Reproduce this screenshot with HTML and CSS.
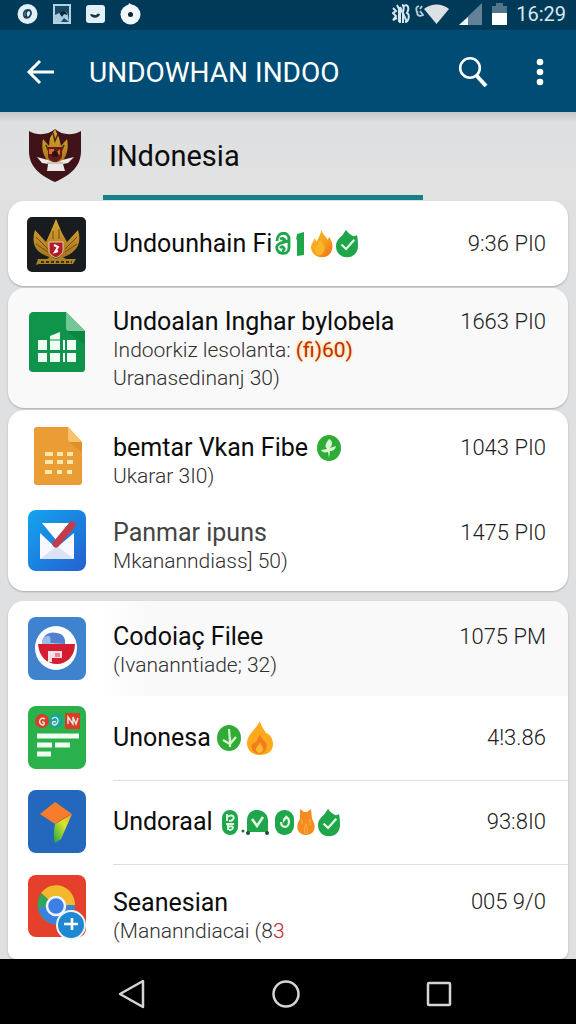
FILE: index.html
```html
<!DOCTYPE html>
<html lang="id">
<head>
<meta charset="utf-8">
<meta name="viewport" content="width=device-width, initial-scale=1">
<title>Undowhan Indoo</title>
<link rel="stylesheet" href="styles.css">
</head>
<body>
<svg class="defs" width="0" height="0" aria-hidden="true">
  <defs>
    <linearGradient id="fire" x1="0" y1="0" x2="1" y2="1"><stop offset="0" stop-color="#fdb822"/><stop offset=".55" stop-color="#f8a01c"/><stop offset="1" stop-color="#ee6a14"/></linearGradient>
    <linearGradient id="mail" x1="0" y1="0" x2="1" y2="1"><stop offset="0" stop-color="#12a5ef"/><stop offset="1" stop-color="#2460cf"/></linearGradient>
    <linearGradient id="gold" x1="0" y1="0" x2="0" y2="1"><stop offset="0" stop-color="#dba833"/><stop offset="1" stop-color="#a8741a"/></linearGradient>
    <linearGradient id="ribbon" x1="1" y1="0" x2="0" y2="1"><stop offset="0" stop-color="#f6a02c"/><stop offset=".4" stop-color="#dbe52c"/><stop offset="1" stop-color="#18a63e"/></linearGradient>
    <symbol id="flame" viewBox="0 0 24 30"><path d="M11 0c1 4 6 8 7 11l2-3c3 5 4 9 3 13-1 6-6 9-11 9S1 27 0 20c0-5 3-7 4-11l2 4c2-4 5-8 5-13z" fill="url(#fire)"/><path d="M9 28c-5-2-6-6-3-10l5-8c0 5 4 5 4 10 0 4-2 7-6 8z" fill="#fbb52b"/></symbol>
    <symbol id="leafcheck" viewBox="0 0 24 30"><path d="M11 0c2 4 5 5 8 7l4-1c1 5 1 9 1 12 0 7-5 12-12 12S0 25 0 18c0-6 4-9 7-12z" fill="#1fa64b"/><path d="M6 16l5 5 9-10" fill="none" stroke="#e5f8e8" stroke-width="2.400"/></symbol>
    <symbol id="sprout" viewBox="0 0 24 26"><ellipse cx="12" cy="13" rx="12" ry="13" fill="#2fac35"/><path d="M12 4c4 2 4 6 1 9l6-2c-1 4-3 5-6 5l-1 7-1-6c-4 1-6 0-7-2l6-1c-3-3-1-6 2-10z" fill="#d9f4cf"/></symbol>
    <symbol id="sproutdown" viewBox="0 0 24 26"><ellipse cx="12" cy="13" rx="12" ry="13" fill="#2fac35"/><path d="M12 4l1 13M6 15l7 4 6-7M13 12v10" fill="none" stroke="#d9f4cf" stroke-width="2.200"/></symbol>
  </defs>
</svg>
<div class="screen">
  <header>
    <div class="status">
      <div class="status-group notices">
        <svg width="21" height="22" viewBox="0 0 21 22"><circle cx="10.500" cy="11" r="10" fill="#e3f0f7"/><path d="M7 13c-1-4 1-6 4-6s4 3 2 6-5 2-6 0M11 7c-3 2-2 6-1 7" fill="none" stroke="#17415a" stroke-width="1.800"/></svg>
        <svg width="18" height="20" viewBox="0 0 18 20"><path d="M1 1h16v18H1z" fill="#174a68" stroke="#b4d2e2" stroke-width="2"/><path d="M2 18v-7l4-2 2 2 3-4c4 0 4 5 5 11l-5-4-3 4z" fill="#a7cbe0"/><path d="M7 10c2-4 7-4 7 1l-3-1-2 3z" fill="#0a2438"/></svg>
        <svg width="19" height="18" viewBox="0 0 19 18"><rect width="19" height="18" rx="3" fill="#e3f0f7"/><path d="M4 9c3 1 7-1 10 0-1 5-9 5-10 0z" fill="#17344a"/><ellipse cx="9" cy="9" rx="2" ry="1" fill="#fff"/></svg>
        <svg width="21" height="22" viewBox="0 0 21 22"><circle cx="10.500" cy="11.500" r="10" fill="#f2f9fd"/><path d="M9 0l5 3H8z" fill="#f2f9fd"/><circle cx="10.500" cy="11.500" r="2.500" fill="#123"/></svg>
      </div>
      <div class="status-group">
        <svg width="18" height="22" viewBox="0 0 18 22"><path d="M1 5l3 3-3 2 3 3-3 4 4-2M5 2l3 6v12M8 4l7 15" fill="none" stroke="#d6e6ef" stroke-width="2"/><path d="M7 4v15M10 2c2 0 2 4 1 7v11M12 3c5-3 5 4 3 7 3 1 2 9-2 9" fill="none" stroke="#d6e6ef" stroke-width="2"/></svg>
        <svg width="35" height="22" viewBox="0 0 35 22"><path d="M5 3c-4 1-3 5-1 7M6 8l3 4c-4 2-6 0-6-3M8 3l-2 3" fill="none" stroke="#b5cedb" stroke-width="1.800"/><path d="M10 6c7-6 18-6 25 0L22.500 21z" fill="#dbe1e5"/></svg>
        <svg class="signal" width="23" height="22" viewBox="0 0 23 22"><path d="M23 0v22H0z" fill="#63829a"/><path d="M9 14v8H0z" fill="#f3f9fc"/></svg>
        <svg class="battery" width="15" height="22" viewBox="0 0 15 22"><path d="M0 3h4V0h7v3h4v8H0z" fill="#53758b"/><path d="M0 10h15v12H0z" fill="#fff"/></svg>
        <span class="clock">16:29</span>
      </div>
    </div>
    <div class="appbar">
      <button class="icon-btn" type="button" aria-label="Back"><svg width="28" height="26" viewBox="0 0 28 26"><path d="M14 2L3 13l11 11M3 13h25" fill="none" stroke="#fff" stroke-width="3"/></svg></button>
      <h1>UNDOWHAN INDOO</h1>
      <button class="icon-btn" type="button" aria-label="Search"><svg width="30" height="32" viewBox="0 0 30 32"><circle cx="12" cy="12" r="9.800" fill="none" stroke="#fff" stroke-width="2.600"/><path d="M18 19l10 11" stroke="#fff" stroke-width="4"/></svg></button>
      <button class="icon-btn" type="button" aria-label="More options"><svg width="8" height="28" viewBox="0 0 8 28"><g fill="#fff"><circle cx="4" cy="4" r="3.300"/><circle cx="4" cy="14" r="3.300"/><circle cx="4" cy="24" r="3.300"/></g></svg></button>
    </div>
  </header>

  <div class="tabs">
    <svg class="crest" width="54" height="54" viewBox="0 0 54 54"><path d="M1 2c9 5 19 4 26-2 7 6 17 7 26 2v20C53 37 43 46 27 53 11 46 1 37 1 22z" fill="#401319"/><path d="M15 10l6 7 1-8 5-9 4 9 2 8 6-7c2 9 0 17-6 24H21c-6-7-8-15-6-24z" fill="url(#gold)"/><path d="M25 4l2 8 3-7M18 16l4 9M36 16l-4 9" stroke="#432b15" stroke-width="1.500" fill="none"/><path d="M20 18h14v9c0 3-4 5-7 7-4-2-7-4-7-7z" fill="#631b18"/><path d="M21 20h5v5h-5zM28 24l4-4v6z" fill="#e06b29"/><circle cx="27" cy="25" r="3" fill="#201614"/><path d="M9 28l11 3c5 3 10 3 14 0l12-3-6 6-5 1 2 7H19l1-7-6-1z" fill="#ede7e5"/><path d="M19 34h16" stroke="#a99b98"/></svg>
    <button class="tab" type="button" aria-pressed="true">INdonesia</button>
  </div>

  <main>
    <section class="card first">
      <a class="row single" href="#undounhain">
        <svg class="icon" width="60" height="60" viewBox="0 0 60 60"><rect x="0" y="3" width="59" height="55" rx="5" fill="#191c1e"/><path d="M8 16l11 12 4-9 6-14 6 14 5 9 11-12c4 14-1 22-14 27H22C8 38 4 30 8 16z" fill="url(#gold)"/><path d="M9 23l12 12M9 30l12 8M50 23L38 35M50 30l-12 8M26 17v8M32 15v10" stroke="#6c4e1d" fill="none"/><path d="M22 28h14v8c0 4-4 6-7 8-4-2-7-4-7-8z" fill="#b31c27" stroke="#e6c8b0"/><path d="M27 31l4 2-3 5 3-1" stroke="#fff" stroke-width="2" fill="none"/><path d="M11 45h9l4-3 5 3 5-3 5 3h10l-3 5H12l-3 1z" fill="#aa8223"/><path d="M14 48h31" stroke="#3b3014" stroke-width="2" stroke-dasharray="3 2"/></svg>
        <span class="text"><span class="title">Undounhain Fi<svg width="16" height="24" viewBox="0 0 16 24"><path d="M2 9c0-10 12-10 12-2 0 4-10 2-12 7-2 9 12 10 12 2V5M5 7c4-2 7 2 2 3M5 16c4-4 6 3 2 3" fill="none" stroke="#1fa64b" stroke-width="2.800"/></svg><svg class="bar" width="9" height="24" viewBox="0 0 9 24"><path d="M1 2l7-2v23l-7 1V7L0 8z" fill="#1fa64b"/></svg><svg width="22" height="29"><use href="#flame"/></svg><svg width="22" height="29"><use href="#leafcheck"/></svg></span></span>
        <time class="time">9:36 PI0</time>
      </a>
    </section>

    <section class="card tinted">
      <a class="row triple" href="#undoalan">
        <svg class="icon" width="60" height="62" viewBox="0 0 60 62"><path d="M6 1h33l19 19v38c0 2-1 3-3 3H6c-2 0-4-1-4-3V5c0-2 2-4 4-4z" fill="#10944b"/><path d="M39 1l19 19H42c-2 0-3-1-3-3z" fill="#75c798"/><path d="M40 20h18v14z" fill="#087a3b" opacity=".5"/><path d="M11 29h9v10h-9zm12-4l10-4v18H23zm13 4h2v10h-2zm4 0h9v10h-9zM11 42h9v9h-9zm12 0h10v9H23zm13 0h2v9h-2zm4 0h9v9h-9z" fill="#effff3"/><path d="M22 29h12" stroke="#10944b"/></svg>
        <span class="text"><span class="title">Undoalan Inghar bylobela</span><span class="sub">Indoorkiz lesolanta: <b class="hot">(fi)60)</b></span><span class="sub">Uranasedinanj 30)</span></span>
        <time class="time">1663 PI0</time>
      </a>
    </section>

    <section class="card">
      <a class="row upper" href="#bemtar">
        <svg class="icon" width="60" height="60" viewBox="0 0 60 60"><path d="M10 1h31l14 15v40c0 2-1 3-3 3H10c-2 0-3-1-3-3V4c0-2 1-3 3-3z" fill="#e99d34"/><path d="M41 1l14 15H44c-2 0-3-1-3-3z" fill="#f6c36c"/><path d="M42 16h13v10z" fill="#cf8321" opacity=".45"/><path d="M18 28h8m4 0h6m4 0h6M18 36h8m4 0h6m4 0h6M18 46h7m5 0h5m5 0h5" stroke="#ffe8a9" stroke-width="4"/></svg>
        <span class="text"><span class="title">bemtar Vkan Fibe <svg width="24" height="26"><use href="#sprout"/></svg></span><span class="sub">Ukarar 3I0)</span></span>
        <time class="time">1043 PI0</time>
      </a>
      <a class="row lower" href="#panmar">
        <svg class="icon" width="60" height="62" viewBox="0 0 60 62"><rect x="1" y="0" width="58" height="61" rx="8" fill="url(#mail)"/><path d="M13 23l16 15 18-15v26H13z" fill="#f8f9ff"/><path d="M13 49l17-13 17 13z" fill="#dbe4f7"/><path d="M15 13h27L29 30z" fill="#fff"/><path d="M29 34l16-19" stroke="#c43c4b" stroke-width="7" stroke-linecap="round"/></svg>
        <span class="text"><span class="title muted">Panmar ipuns</span><span class="sub">Mkananndiass] 50)</span></span>
        <time class="time">1475 PI0</time>
      </a>
    </section>

    <section class="card last">
      <a class="row shaded" href="#codoiar">
        <svg class="icon" width="60" height="64" viewBox="0 0 60 64"><rect x="1" y="0" width="58" height="63" rx="8" fill="#3f83cf"/><ellipse cx="29" cy="31" rx="21" ry="22" fill="#fff"/><path d="M15 26c1-8 7-12 15-10 6 1 9 5 8 11z" fill="#5381d2"/><path d="M15 23c6-7 10-5 8 4h-8z" fill="#9cbdeb"/><path d="M11 27h37c0 12-8 20-18 20-11 0-18-8-19-20z" fill="#d51c31"/><path d="M21 34h14v7H25v4h-4z" fill="#f7e3e7"/><path d="M28 36h5v4h-5z" fill="#e98795"/></svg>
        <span class="text"><span class="title">Codoiaç Filee</span><span class="sub">(Ivananntiade; 32)</span></span>
        <time class="time">1075 PM</time>
      </a>
      <a class="row single" href="#unonesa">
        <svg class="icon" width="60" height="64" viewBox="0 0 60 64"><rect x="1" y="0" width="58" height="63" rx="8" fill="#2bb14b"/><circle cx="15" cy="15" r="7" fill="#dd3b27"/><circle cx="29" cy="15" r="7" fill="#16a69c"/><path d="M38 7h15v16H38z" fill="#dd3b27"/><path d="M18 13c-4-3-8 3-3 6 3 0 3-4 0-3M25 13c5-5 9 3 3 6-4 0-3-5 1-3M41 18v-7l5 7v-7l3 7 2-6" fill="none" stroke="#e5eee8" stroke-width="1.400"/><path d="M10 30h42M10 39h15m3 0h15M10 48h14" stroke="#f1fff2" stroke-width="5"/></svg>
        <span class="text"><span class="title">Unonesa<svg class="spaced" width="24" height="26"><use href="#sproutdown"/></svg><svg class="spaced" width="26" height="34" viewBox="0 0 26 34"><path d="M13 0c1 5 3 7 6 12 4 1 7 6 7 11 0 7-5 11-13 11S0 29 0 22C0 14 9 8 13 0z" fill="#fca91c"/><path d="M13 33c-8-1-9-5-8-10l4-2 4-8c1 5 5 7 7 10 0 5-2 9-7 10z" fill="#f47b20"/><path d="M13 21c1 4 4 5 3 8-1 4-6 4-7 0-1-3 3-4 4-8z" fill="#fdb92d"/></svg></span></span>
        <time class="time">4!3.86</time>
      </a>
      <a class="row single ruled" href="#undoraal">
        <svg class="icon" width="60" height="64" viewBox="0 0 60 64"><rect x="1" y="0" width="58" height="63" rx="8" fill="#2468bd"/><path d="M28 34l17-10-11 25-6 4c-2-5-1-13 0-19z" fill="url(#ribbon)"/><path d="M13 24l15-12 17 12-17 10z" fill="#f77c2c"/><path d="M28 34l17-10-8 4z" fill="#ce5222"/></svg>
        <span class="text"><span class="title">Undoraal <svg width="16" height="25" viewBox="0 0 16 25"><rect width="16" height="25" rx="8" fill="#1fa64b"/><path d="M5 4v7M5 7c8-5 9 4 2 4M4 14h8M6 13v7m0-3c7-3 6 3 1 3" fill="none" stroke="#dff6e2" stroke-width="2"/></svg><svg width="28" height="25" viewBox="0 0 28 25"><path d="M6 22V11C6 4 10 0 16 0s11 4 11 11v11z" fill="#1fa64b"/><circle cx="2" cy="21" r="1.500" fill="#286a37"/><circle cx="7" cy="23" r="2" fill="#17552a"/><circle cx="26" cy="23" r="2" fill="#17552a"/><path d="M11 9l5 7 6-9" fill="none" stroke="#dff6e2" stroke-width="2.600"/></svg><svg class="spaced" width="19" height="25" viewBox="0 0 19 25"><rect width="19" height="25" rx="9" fill="#1fa64b"/><path d="M6 12c0 7 8 6 8 0s-5-5-5-2l3-4" fill="none" stroke="#dff6e2" stroke-width="2.200"/></svg><svg width="18" height="26" viewBox="0 0 18 26"><path d="M3 0l4 3h3l4-3 1 10c5 7 3 16-6 16S-2 17 3 10z" fill="#f68b1f"/><path d="M8 25c-1-5 0-8 1-10 1 3 2 6 1 10M5 10v5M13 10v6" stroke="#fbb04c" fill="none"/></svg><svg width="22" height="29"><use href="#leafcheck"/></svg></span></span>
        <time class="time">93:8I0</time>
      </a>
      <a class="row bottom ruled" href="#seanesian">
        <svg class="icon" width="60" height="66" viewBox="0 0 60 66"><rect x="1" y="0" width="58" height="62" rx="8" fill="#e5402b"/><path d="M14 18a19 20 0 0 1 34 14H29z" fill="#f4b82d"/><path d="M29 31L14 18c-6 10-4 24 8 30z" fill="#2fa65a"/><path d="M29 30L11 33c3 10 10 17 20 17 9 0 17-8 17-20z" fill="#3b82dc"/><circle cx="29" cy="31" r="9" fill="#3e7fe5" stroke="#f0f5fc" stroke-width="2.500"/><circle cx="44" cy="50" r="14" fill="#1e88d2" stroke="#eaf5fc" stroke-width="2"/><path d="M37 49h14M45 43v12" stroke="#fff" stroke-width="2.600"/></svg>
        <span class="text"><span class="title">Seanesian</span><span class="sub">(Mananndiacai (8<span class="red">3</span></span></span>
        <time class="time">005 9/0</time>
      </a>
    </section>
  </main>

  <nav class="navbar" aria-label="System">
    <button type="button" aria-label="Back"><svg width="28" height="30" viewBox="0 0 28 30"><path d="M25 2v26L2 15z" fill="none" stroke="#d5d5d5" stroke-width="2.500" stroke-linejoin="round"/></svg></button>
    <button type="button" aria-label="Home"><svg width="28" height="30" viewBox="0 0 28 30"><circle cx="14" cy="15" r="12.500" fill="none" stroke="#d5d5d5" stroke-width="2.500"/></svg></button>
    <button type="button" aria-label="Recent apps"><svg width="28" height="30" viewBox="0 0 28 30"><rect x="3" y="4" width="22" height="22" rx="1" fill="none" stroke="#d5d5d5" stroke-width="2.500"/></svg></button>
  </nav>
</div>
</body>
</html>
```

FILE: styles.css
```css
* { box-sizing: border-box; }

body {
  margin: 0;
  font-family: Roboto, "Liberation Sans", sans-serif;
  color: #0c0c0c;
  background: #dfe0e1;
}

button {
  padding: 0;
  border: 0;
  background: none;
  font: inherit;
  color: inherit;
}

svg { display: block; }
.defs { position: absolute; }

.screen {
  display: flex;
  flex-direction: column;
  min-height: 100vh;
}

.status {
  display: flex;
  justify-content: space-between;
  align-items: center;
  height: 30px;
  padding: 0 10px 2px 17px;
  background: #003a59;
}

.status-group {
  display: flex;
  align-items: center;
  gap: 4px;
}
.notices { gap: 15px; }
.signal { margin-left: 6px; }
.battery { margin: 0 5px 0 6px; }

.clock {
  font-size: 20px;
  line-height: 28px;
  color: #d9e8f0;
}

.appbar {
  display: flex;
  align-items: center;
  height: 82px;
  padding: 2px 32px 0 26px;
  background: #004c74;
  color: #fff;
}

.appbar h1 {
  flex: 1;
  margin: 0 0 0 35px;
  padding-top: 2px;
  font-size: 28px;
  font-weight: 400;
  line-height: 36px;
}

.icon-btn + .icon-btn { margin-left: 48px; }

.tabs {
  display: flex;
  align-items: center;
  gap: 21px;
  height: 88px;
  padding-left: 28px;
  background: linear-gradient(#c4c6c8, #dedfe0 10px, #e2e2e3);
}

.tab {
  align-self: stretch;
  width: 320px;
  padding: 4px 6px 0;
  border-bottom: 5px solid #14808a;
  font-size: 29px;
  text-align: left;
}

main {
  flex: 1;
  padding: 0 8px;
}

.card {
  margin-bottom: 2px;
  overflow: hidden;
  border-radius: 16px;
  background: #fff;
  box-shadow: 0 1px 2px #a9abad;
}
.card.first { margin-top: 1px; }
.card.tinted { background: #f9f9f9; }
.card.last {
  margin: 10px 0 0;
  border-radius: 16px 16px 8px 8px;
}

.row {
  display: grid;
  grid-template-columns: 60px 1fr auto;
  column-gap: 26px;
  align-items: center;
  padding: 0 22px 0 19px;
  color: inherit;
  text-decoration: none;
}

.single { min-height: 84px; }
.first .single { min-height: 85px; }
.triple { min-height: 120px; padding-bottom: 12px; }
.upper { min-height: 87px; padding-top: 4px; }
.lower { min-height: 94px; padding-bottom: 6px; }
.shaded {
  min-height: 95px;
  background: linear-gradient(90deg, #fff 90px, #f9f9f9 140px);
}
.bottom { min-height: 95px; padding-bottom: 8px; }

.text,
.time {
  padding-top: 12px;
  align-self: center;
}
.single .text,
.single .time { padding-top: 0; }
.triple .text { padding-top: 16px; }
.shaded .text { padding-top: 4px; }
.bottom .text { padding-top: 18px; }

.title {
  display: flex;
  align-items: center;
  gap: 3px;
  height: 28px;
  font-size: 25px;
  line-height: 28px;
  white-space: pre;
}
.title.muted { color: #444; }
.title .bar { margin: 0 3px 0 2px; }
.title .spaced { margin-left: 3px; }

.sub {
  display: block;
  font-size: 21px;
  line-height: 28px;
  font-weight: 300;
  color: #303030;
  white-space: nowrap;
}

.time {
  align-self: stretch;
  font-size: 22px;
  line-height: 28px;
  font-weight: 300;
  color: #202020;
}
.single .time { align-self: center; }
.triple .time,
.upper .time { padding-top: 20px; }
.lower .time,
.shaded .time { padding-top: 22px; }
.bottom .time { padding-top: 24px; }

.hot {
  font-weight: 400;
  color: #c52b12;
  text-shadow: 0 0 3px #ffc928;
}
.red { color: #c5242c; }

.ruled {
  background: linear-gradient(#dfdfdf, #dfdfdf) 105px 0 / 100% 1px no-repeat;
}

.navbar {
  display: flex;
  justify-content: space-between;
  align-items: center;
  height: 65px;
  padding: 4px 123px 0 118px;
  background: #000;
}
```
